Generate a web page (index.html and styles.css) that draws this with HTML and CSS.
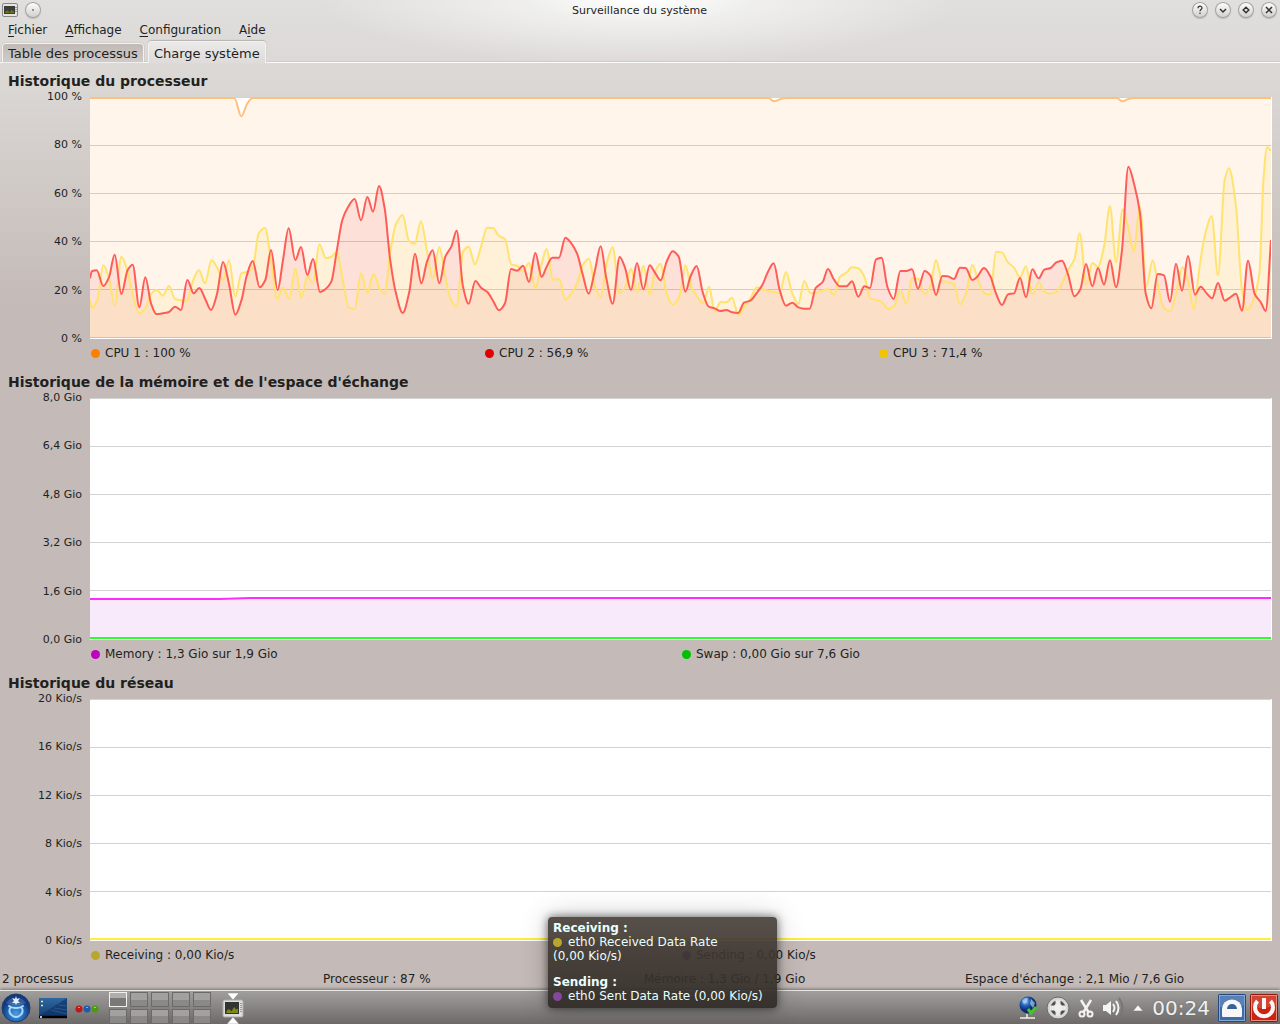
FILE: index.html
```html
<!DOCTYPE html>
<html lang="fr">
<head>
<meta charset="utf-8">
<meta name="viewport" content="width=device-width, initial-scale=1">
<title>Surveillance du système</title>
<link rel="stylesheet" href="styles.css">
</head>
<body>
<header class="titlebar">
  <div class="titlebar-group">
    <svg class="app-icon" viewBox="0 0 16 16" aria-hidden="true"><rect x=".5" y="1.500" width="15" height="13" rx="1.500" fill="#e4e4e2" stroke="#888"/><rect x="2" y="4" width="11" height="8" fill="#3a3d38"/><path d="M3 11c1-3 3-3 4-1s2-3 3-2 1 2 2 1v2H3z" fill="#6f7418"/><path d="M14 5v6" stroke="#555" stroke-dasharray="1 1"/></svg>
    <button class="round" aria-label="Sur tous les bureaux"><svg viewBox="0 0 16 16"><circle cx="8" cy="8" r="1" fill="#777"/></svg></button>
  </div>
  <h1 class="window-title">Surveillance du système</h1>
  <div class="titlebar-group titlebar-end">
    <button class="round" aria-label="Aide"><svg viewBox="0 0 16 16"><path d="M6 6.300c0-2.800 4-2.800 4-.3 0 1.500-2 1.500-2 3.200M8 10.500v1.500" class="mark thin"/></svg></button>
    <button class="round" aria-label="Réduire"><svg viewBox="0 0 16 16"><path d="M5 7l3 3 3-3" class="mark"/></svg></button>
    <button class="round" aria-label="Maximiser"><svg viewBox="0 0 16 16"><path d="M8 5.200L10.800 8 8 10.800 5.200 8z" class="mark"/></svg></button>
    <button class="round" aria-label="Fermer"><svg viewBox="0 0 16 16"><path d="M5 5l6 6M11 5l-6 6" class="mark"/></svg></button>
  </div>
</header>
<nav class="menubar">
  <button><u>F</u>ichier</button><button><u>A</u>ffichage</button><button><u>C</u>onfiguration</button><button>A<u>i</u>de</button>
</nav>
<div class="tabs" role="tablist">
  <button class="tab" role="tab" aria-selected="false">Table des processus</button>
  <button class="tab active" role="tab" aria-selected="true">Charge système</button>
</div>
<main class="sheet">
  <section class="monitor">
    <h2>Historique du processeur</h2>
    <div class="chart">
      <div class="axis"><span>100 %</span><span>80 %</span><span>60 %</span><span>40 %</span><span>20 %</span><span>0 %</span></div>
      <div class="plot">
        <svg id="cpu" viewBox="30 21 3543 723" preserveAspectRatio="none">
          <path class="grid" d="M30 22.500h3543M30 166.500h3543M30 310.500h3543M30 454.500h3543M30 598.500h3543M30 742.500h3543"/>
        </svg>
      </div>
      <ul class="legend thirds">
        <li><i class="dot orange"></i>CPU 1 : 100 %</li>
        <li><i class="dot red"></i>CPU 2 : 56,9 %</li>
        <li><i class="dot yellow"></i>CPU 3 : 71,4 %</li>
      </ul>
    </div>
  </section>
  <section class="monitor">
    <h2>Historique de la mémoire et de l'espace d'échange</h2>
    <div class="chart">
      <div class="axis"><span>8,0 Gio</span><span>6,4 Gio</span><span>4,8 Gio</span><span>3,2 Gio</span><span>1,6 Gio</span><span>0,0 Gio</span></div>
      <div class="plot">
        <svg viewBox="0 0 1181 241" preserveAspectRatio="none">
          <path class="grid" d="M0 .5h1181M0 48.500h1181M0 96.500h1181M0 144.500h1181M0 192.500h1181M0 240.500h1181"/>
          <path fill="#f8eafa" d="M0 201H140L160 200H1181V240H0z"/>
          <path class="line" stroke="#ff2cff" d="M0 201H130L160 200H1181"/>
          <path class="line" stroke="#2cff2c" d="M0 240H1181"/>
        </svg>
      </div>
      <ul class="legend halves">
        <li><i class="dot purple"></i>Memory : 1,3 Gio sur 1,9 Gio</li>
        <li><i class="dot green"></i>Swap : 0,00 Gio sur 7,6 Gio</li>
      </ul>
    </div>
  </section>
  <section class="monitor">
    <h2>Historique du réseau</h2>
    <div class="chart">
      <div class="axis"><span>20 Kio/s</span><span>16 Kio/s</span><span>12 Kio/s</span><span>8 Kio/s</span><span>4 Kio/s</span><span>0 Kio/s</span></div>
      <div class="plot">
        <svg viewBox="0 0 1181 241" preserveAspectRatio="none">
          <path class="grid" d="M0 .5h1181M0 48.500h1181M0 96.500h1181M0 144.500h1181M0 192.500h1181M0 240.500h1181"/>
          <path class="line" stroke="#ffee3c" d="M0 240H1181"/>
        </svg>
      </div>
      <ul class="legend halves">
        <li><i class="dot olive"></i>Receiving : 0,00 Kio/s</li>
        <li><i class="dot violet"></i>Sending : 0,00 Kio/s</li>
      </ul>
    </div>
  </section>
</main>
<div class="statusbar"><span>2 processus</span><span>Processeur : 87 %</span><span>Mémoire : 1,3 Gio / 1,9 Gio</span><span>Espace d'échange : 2,1 Mio / 7,6 Gio</span></div>
<footer class="panel">
  <div class="launchers">
    <button aria-label="Menu"><svg width="30" height="30" viewBox="0 0 30 30"><defs><radialGradient id="k" cy=".7"><stop offset="0" stop-color="#4a9ee0"/><stop offset=".6" stop-color="#2564b0"/><stop offset="1" stop-color="#123a80"/></radialGradient></defs><circle cx="15" cy="15" r="14" fill="url(#k)" stroke="#1d3c70"/><path d="M5 10a11 9 0 0 1 20 0q-10 5-20 0z" fill="#fff" opacity=".15"/><path d="M8 13q3 2 7 2t7-2M9.500 14.500q-2.500 4 .5 7 2 2.500 5 2.500t5-2.500q3-3 .5-7" fill="none" stroke="#a8dcff" stroke-width="2" stroke-linecap="round"/><path d="M15 3l1 3 3-1-2 3 2 2-3 0-1 2-1-2-3 0 2-2-2-3 3 1z" fill="#dff1ff"/></svg></button>
    <button aria-label="Afficher le bureau"><svg width="28" height="30" viewBox="0 0 28 30"><defs><linearGradient id="d" x2="0" y2="1"><stop offset="0" stop-color="#2f67a0"/><stop offset="1" stop-color="#143c70"/></linearGradient></defs><rect y="5" width="28" height="20" fill="url(#d)"/><path d="M0 23L28 5v18z" fill="#0b2f62" opacity=".6"/><path d="M12 17l16 4M15 15l13 2M19 12l9 1" stroke="#3d74ac" opacity=".5"/><path d="M0 24h28" stroke="#000" stroke-width="2.500"/><path d="M1 24h2" stroke="#9cf" stroke-width="2"/><path d="M2 8.500h2M2 12.500h2" stroke="#e6efb0" stroke-width="1.500"/></svg></button>
    <button aria-label="Activités"><svg width="24" height="30" viewBox="0 0 24 30"><circle cx="4" cy="16" r="3.500" fill="#c01818"/><circle cx="12" cy="16" r="3.500" fill="#1c5cac"/><circle cx="20" cy="16" r="3.500" fill="#4c9a12"/><path d="M3 14.500h2M11 14.500h2M19 14.500h2" stroke="#fff" opacity=".5"/></svg></button>
    <div class="pager"><a href="#" class="current" aria-label="Bureau 1"></a><a href="#" aria-label="Bureau 2"></a><a href="#" aria-label="Bureau 3"></a><a href="#" aria-label="Bureau 4"></a><a href="#" aria-label="Bureau 5"></a><a href="#" aria-label="Bureau 6"></a><a href="#" aria-label="Bureau 7"></a><a href="#" aria-label="Bureau 8"></a><a href="#" aria-label="Bureau 9"></a><a href="#" aria-label="Bureau 10"></a></div>
    <button aria-label="Surveillance du système"><svg width="22" height="32" viewBox="0 0 22 32"><rect x="1" y="8" width="20" height="17" rx="1.500" fill="#ddd" stroke="#aaa"/><rect x="3" y="10" width="14" height="12" fill="#31352f"/><path d="M4 21c2-6 4-3 5-2s3-6 4-3 2 0 3 1v4z" fill="#80851c"/><path d="M19 11v9" stroke="#555" stroke-dasharray="1 1"/><path d="M5 1h12l-6 7zM5 32h12l-6-7z" fill="#fff" stroke="#888" stroke-width=".5"/></svg></button>
  </div>
  <div class="tray">
    <svg width="20" height="26" viewBox="0 0 20 26"><defs><radialGradient id="g" cx=".35" cy=".3"><stop offset="0" stop-color="#9cc8ff"/><stop offset=".5" stop-color="#2563b8"/><stop offset="1" stop-color="#0c2c70"/></radialGradient></defs><circle cx="10" cy="10" r="8.500" fill="url(#g)"/><path d="M4 6q3-4 6-3l-1 4-3 2zM13 4l4 4-2 5-3-4z" fill="#b5d8f5" opacity=".65"/><path d="M10 14l3 4 5-6" fill="none" stroke="#48c428" stroke-width="3"/><path d="M9 19v4M2 23h15" stroke="#eee" stroke-width="1.500"/></svg>
    <svg width="24" height="26" viewBox="0 0 24 26"><circle cx="12" cy="13" r="11" fill="#c8c8c8" stroke="#6c6c6c"/><circle cx="12" cy="13" r="6" fill="none" stroke="#4e4e4e" stroke-width="3"/><path d="M12 4v18M3 13h18" stroke="#e8e8e8" stroke-width="5"/><circle cx="12" cy="13" r="9" fill="none" stroke="#d8d8d8" stroke-width="2"/><circle cx="12" cy="13" r="4" fill="#eee"/></svg>
    <svg width="16" height="26" viewBox="0 0 16 26"><path d="M3 5l8 13M13 5L5 18" stroke="#f2f2f2" stroke-width="2.500"/><circle cx="4" cy="19" r="2.500" class="tray-ring"/><circle cx="12" cy="19" r="2.500" class="tray-ring"/></svg>
    <svg width="22" height="26" viewBox="0 0 22 26"><path d="M1 10h3l5-4v14l-5-4H1z" fill="#f4f4f4"/><path d="M11 9q3 4 0 8M14 6q5 7 0 14" fill="none" stroke="#f4f4f4" stroke-width="2"/><path d="M17 3q7 10 0 20" fill="none" stroke="#777" stroke-width="2"/></svg>
    <svg width="12" height="26" viewBox="0 0 12 26"><path d="M1 16l5-6 5 6z" fill="#f8f8f8" stroke="#777" stroke-width=".5"/></svg>
    <time class="clock">00:24</time>
    <div class="session">
      <button aria-label="Verrouiller"><svg width="28" height="28" viewBox="0 0 28 28"><rect x=".5" y=".5" width="27" height="27" rx="1" fill="#3c6cac" stroke="#234a80"/><rect x="1.500" y="1.500" width="25" height="25" fill="none" stroke="#86a7d2"/><path d="M2 2h24v9q-12 5-24 2z" fill="#fff" opacity=".15"/><path d="M4 22v-7a10 9.500 0 0 1 20 0v7q0 1-1 1H5q-1 0-1-1z" fill="#f7f7f7"/><path d="M9 15a5 5 0 0 1 10 0z" fill="#376297"/></svg></button>
      <button aria-label="Éteindre"><svg width="28" height="28" viewBox="0 0 28 28"><rect x=".5" y=".5" width="27" height="27" rx="1" fill="#cc2410" stroke="#8c180a"/><rect x="1.500" y="1.500" width="25" height="25" fill="none" stroke="#ea8c7e"/><path d="M2 2h24v9q-12 5-24 2z" fill="#fff" opacity=".15"/><path d="M7.500 7a9 9 0 1 0 13 0" fill="none" stroke="#f7f7f7" stroke-width="4"/><path d="M14 4v11" stroke="#f7f7f7" stroke-width="4"/></svg></button>
    </div>
  </div>
</footer>
<aside class="tooltip" role="tooltip">
  <b>Receiving :</b>
  <p><i class="dot olive"></i>eth0 Received Data Rate <br>(0,00 Kio/s)</p>
  <b>Sending :</b>
  <p><i class="dot violet"></i>eth0 Sent Data Rate (0,00 Kio/s)</p>
</aside>
<script src="cpu.js"></script>
</body>
</html>
```
FILE: cpu.js
```js
// Recorded CPU load, oldest first. Each block is a stretch of 900 time units,
// holding x, y pairs measured from the start of that stretch.
const SPAN = 900;
const BASE = 744;
const series = [
  { line: '#ffc07c', fill: 'rgba(255,128,0,.08)', blocks: [
    [30,24, 463,24, 484,79, 502,40, 518,24],
    [0,24],
    [266,24, 282,34, 302,27, 318,24],
    [411,24, 427,34, 445,27, 460,24, 873,24]] },
  { line: '#ff5c57', fill: 'rgba(224,0,0,.08)', blocks: [
    [30,565, 36,543, 50,541, 70,588, 87,562, 104,494, 124,612, 143,540, 158,524, 178,652, 196,562, 213,640, 229,672, 249,670, 267,666, 285,650, 303,660, 322,570, 341,610, 358,594, 376,628, 393,660, 411,612, 429,516, 447,582, 466,674, 484,632, 500,558, 518,513, 539,592, 556,570, 573,480, 593,600, 609,510, 626,415, 646,510, 663,471, 682,555, 699,507, 720,606, 737,597, 754,575, 770,485, 787,390, 803,353, 824,327, 843,391, 862,321, 879,365, 897,288],
    [14,355, 30,505, 48,610, 68,669, 88,605, 105,491, 124,580, 141,515, 158,481, 178,580, 196,500, 214,470, 230,422, 249,590, 266,641, 286,573, 304,594, 322,606, 339,632, 357,661, 375,640, 393,537, 412,542, 429,527, 447,576, 466,489, 485,561, 500,530, 517,503, 537,503, 556,443, 574,460, 591,490, 608,553, 626,611, 644,545, 662,469, 679,565, 698,641, 719,501, 735,533, 753,600, 771,519, 790,598, 809,526, 825,548, 842,571, 860,515, 878,484, 896,500],
    [16,605, 32,558, 50,528, 68,606, 86,650, 104,655, 121,663, 139,660, 156,667, 174,669, 192,638, 211,632, 229,610, 247,585, 264,545, 281,520, 299,600, 318,647, 337,638, 355,652, 373,656, 389,656, 407,594, 428,576, 444,537, 462,569, 480,589, 499,589, 516,574, 535,620, 553,589, 570,594, 588,508, 605,503, 622,590, 641,627, 661,543, 679,543, 696,538, 714,596, 734,543, 751,556, 768,615, 787,558, 803,559, 822,567, 840,533, 857,534, 877,570, 892,560],
    [12,534, 31,559, 48,610, 66,645, 84,613, 102,610, 120,564, 138,622, 157,538, 176,565, 193,539, 212,534, 229,517, 246,512, 264,553, 283,619, 301,598, 318,522, 337,589, 354,534, 372,584, 390,511, 408,592, 426,480, 445,230, 463,285, 480,370, 497,610, 514,655, 533,552, 552,556, 570,635, 588,521, 606,602, 624,498, 645,614, 662,590, 680,610, 696,625, 714,579, 734,632, 751,622, 768,611, 786,662, 804,512, 824,612, 842,636, 857,663, 873,450]] },
  { line: '#ffe36e', fill: 'rgba(240,200,0,.08)', blocks: [
    [30,630, 36,654, 52,630, 70,526, 87,565, 104,646, 124,500, 143,545, 161,625, 178,670, 196,655, 213,612, 230,600, 249,617, 267,588, 285,627, 303,631, 320,634, 338,575, 357,541, 375,580, 394,511, 411,532, 429,570, 447,511, 466,620, 484,550, 500,546, 518,535, 536,430, 555,414, 573,510, 592,626, 609,592, 627,627, 646,536, 664,622, 682,560, 699,578, 718,463, 738,505, 754,500, 770,486, 790,580, 806,652, 824,656, 843,550, 862,609, 880,552],
    [0,597, 14,611, 30,490, 48,402, 68,375, 87,453, 104,461, 123,394, 141,485, 158,565, 178,471, 196,560, 213,630, 230,650, 249,485, 266,470, 285,523, 303,470, 321,413, 339,414, 357,438, 375,447, 394,523, 412,528, 429,544, 447,519, 466,595, 484,525, 500,477, 519,569, 538,567, 556,629, 574,610, 592,577, 608,525, 627,506, 644,585, 662,621, 680,520, 698,472, 718,608, 735,592, 753,536, 771,606, 790,527, 809,614, 825,545, 842,521, 860,610, 878,644, 897,622],
    [16,526, 32,585, 50,618, 70,640, 87,590, 104,663, 122,636, 139,637, 156,623, 175,675, 192,650, 211,626, 231,592, 247,598, 264,602, 299,609, 318,546, 337,610, 355,641, 373,573, 391,609, 408,608, 428,602, 444,597, 462,614, 480,560, 499,548, 516,532, 535,535, 553,560, 571,625, 590,630, 606,637, 625,657, 643,647, 661,600, 679,641, 696,565, 714,566, 734,612, 751,590, 768,510, 787,574, 803,575, 822,583, 840,643, 858,610, 877,525, 895,572],
    [12,609, 31,614, 48,485, 66,488, 84,517, 102,533, 120,562, 138,529, 157,612, 176,576, 193,605, 210,611, 229,605, 246,580, 264,540, 283,508, 299,430, 319,583, 337,519, 354,530, 372,470, 390,348, 408,516, 428,358, 444,410, 461,483, 480,350, 499,590, 518,511, 535,590, 550,652, 570,663, 588,610, 607,532, 624,570, 641,656, 660,520, 676,430, 695,378, 714,556, 734,270, 747,235, 768,350, 786,600, 802,660, 820,630, 838,550, 851,260, 861,172, 873,182]] }
];

function points(blocks) {
  const out = [];
  blocks.forEach((block, n) => {
    for (let i = 0; i < block.length; i += 2) out.push([block[i] + n * SPAN, block[i + 1]]);
  });
  return out;
}

// Monotone cubic curve: smooth, with no overshoot at peaks.
function smooth(p) {
  const slope = i => (p[i + 1][1] - p[i][1]) / (p[i + 1][0] - p[i][0]);
  const tangent = p.map((_, i) => {
    if (i === 0) return slope(0);
    if (i === p.length - 1) return slope(i - 1);
    const a = slope(i - 1), b = slope(i);
    return a * b <= 0 ? 0 : 2 * a * b / (a + b);
  });
  let d = `M${p[0]}`;
  for (let i = 1; i < p.length; i++) {
    const [x0, y0] = p[i - 1], [x1, y1] = p[i], h = (x1 - x0) / 3;
    d += `C${x0 + h} ${y0 + tangent[i - 1] * h} ${x1 - h} ${y1 - tangent[i] * h} ${x1} ${y1}`;
  }
  return d;
}

function addPath(svg, attributes) {
  const path = document.createElementNS('http://www.w3.org/2000/svg', 'path');
  for (const name in attributes) path.setAttribute(name, attributes[name]);
  svg.append(path);
}

const cpu = document.getElementById('cpu');
const curves = series.map(s => ({ ...s, d: smooth(points(s.blocks)) }));
curves.forEach(c => addPath(cpu, { fill: c.fill, d: `${c.d}V${BASE}H30Z` }));
[curves[0], curves[2], curves[1]].forEach(c => addPath(cpu, { class: 'line', stroke: c.line, d: c.d }));
```
FILE: styles.css
```css
* { box-sizing: border-box; }

body {
  margin: 0;
  min-height: 100vh;
  display: flex;
  flex-direction: column;
  position: relative;
  font: 12px/15px "DejaVu Sans", sans-serif;
  color: #221f1e;
  background:
    radial-gradient(ellipse 320px 64px at 50% 0, #fff 0, rgba(243, 243, 242, .8) 35%, rgba(224, 223, 221, 0) 100%) no-repeat,
    linear-gradient(#e0dfdd 0, #dad6d3 90px, #c4bbb8 300px, #c4bbb8 100%);
}

button {
  margin: 0;
  padding: 0;
  border: 0;
  background: none;
  font: inherit;
  color: inherit;
}

svg { display: block; }

.titlebar {
  display: grid;
  grid-template-columns: 1fr auto 1fr;
  align-items: center;
  height: 20px;
  padding: 0 3px 0 2px;
}
.titlebar-group { display: flex; gap: 7px; }
.titlebar-end { justify-content: flex-end; }
.app-icon { width: 16px; height: 16px; }
.window-title { margin: 0; font-size: 11px; font-weight: 400; }
.round {
  width: 16px;
  height: 16px;
  border-radius: 50%;
  background: linear-gradient(#fff, #cfcdca);
  box-shadow: inset 0 0 0 1px #a3a09d, 0 1px 1px #8886;
}
.mark { fill: none; stroke: #333; stroke-width: 1.5px; }
.mark.thin { stroke-width: 1.2px; }

.menubar { display: flex; gap: 18px; height: 20px; padding: 0 8px; }
.menubar u { text-underline-offset: 2px; }

.tabs {
  display: flex;
  align-items: flex-end;
  gap: 4px;
  height: 23px;
  padding: 0 2px;
  border-bottom: 1px solid #fbfbfb;
  box-shadow: inset 0 -1px #cfcccb;
}
.tab {
  height: 19px;
  padding: 1px 5px 0;
  border: 1px solid #f3f2f1;
  border-bottom: 0;
  border-radius: 4px 4px 0 0;
  font-size: 13px;
  background: linear-gradient(#c1bab7, #d0cbc8);
  box-shadow: 0 0 1px #777;
}
.tab.active {
  height: 22px;
  margin-bottom: -1px;
  background: linear-gradient(#ebeae9, #dedbd9);
  box-shadow: 0 -1px 1px #7776;
}

.sheet {
  flex: 1;
  display: flex;
  flex-direction: column;
  padding: 8px 8px 0;
}
.monitor { flex: 1 auto; display: flex; flex-direction: column; }
.monitor h2 { margin: 0; padding: 1px 0 7px; font-size: 14px; line-height: 18px; }
.chart {
  flex: 1;
  display: grid;
  grid-template: minmax(242px, 1fr) auto / 74px 1fr;
  column-gap: 8px;
}
.axis {
  display: flex;
  flex-direction: column;
  justify-content: space-between;
  margin: -8px 0 -7px;
  font-size: 11px;
  line-height: 15px;
  text-align: right;
}
.plot { display: grid; border: solid #fff; border-width: 0 1px 1px 0; background: #fff; }
.plot svg { width: 100%; height: 100%; min-height: 0; }
.grid, .line { fill: none; vector-effect: non-scaling-stroke; }
.grid { stroke: #d3d3d3; stroke-width: 1px; }
.line { stroke-width: 2px; }

.legend {
  grid-column: 2;
  display: grid;
  margin: 0;
  padding: 7px 0 11px;
  list-style: none;
}
.monitor:last-child .legend { padding-bottom: 6px; }
.thirds { grid-template-columns: repeat(3, 1fr); }
.halves { grid-template-columns: repeat(2, 1fr); }
.legend li { padding-left: 1px; }
.dot {
  display: inline-block;
  width: 9px;
  height: 9px;
  margin-right: 5px;
  border-radius: 50%;
  vertical-align: -1px;
}
.orange { background: #ff8000; }
.red { background: #e00000; }
.yellow { background: #f2c400; }
.purple { background: #c000c0; }
.green { background: #00c000; }
.olive { background: #b8a62e; }
.violet { background: #87479a; }

.statusbar {
  display: grid;
  grid-template-columns: repeat(4, 1fr);
  gap: 6px;
  padding: 3px 0 3px 2px;
}

.panel {
  display: flex;
  justify-content: space-between;
  height: 34px;
  border-top: 1px solid #e8e6e5;
  background: linear-gradient(#a19f9e, #6c6968);
  box-shadow: 0 -1px 3px #0006;
}
.launchers, .tray { display: flex; align-items: center; gap: 8px; }
.launchers { padding-left: 1px; }
.pager {
  display: grid;
  grid-template: repeat(2, 15px) / repeat(5, 18px);
  gap: 2px 3px;
  padding: 0 3px 0 2px;
}
.pager a {
  border: 1px solid #6c6a69;
  background: linear-gradient(#a3a1a0 50%, #8b8988 50%);
}
.pager .current { border-color: #f0f0f0; background: linear-gradient(#b0aeac 40%, #7b7978 40%); }
.tray { padding-right: 2px; }
.tray-ring { fill: none; stroke: #f2f2f2; stroke-width: 2px; }
.session { display: flex; gap: 4px; }
.clock {
  font-size: 20px;
  line-height: 26px;
  color: #f0f0f0;
  text-shadow: 0 0 2px #666;
}

.tooltip {
  position: absolute;
  left: 548px;
  bottom: 16px;
  width: 229px;
  padding: 4px 5px 5px;
  border-radius: 4px;
  line-height: 14px;
  color: #e8ffff;
  background: linear-gradient(rgba(69, 60, 53, .9), rgba(48, 43, 38, .93));
  box-shadow: 0 0 10px #0009, 0 0 30px #0003;
}
.tooltip p { margin: 0; }
.tooltip .dot { margin-right: 6px; }
.tooltip p + b { display: block; margin-top: 12px; }
```
